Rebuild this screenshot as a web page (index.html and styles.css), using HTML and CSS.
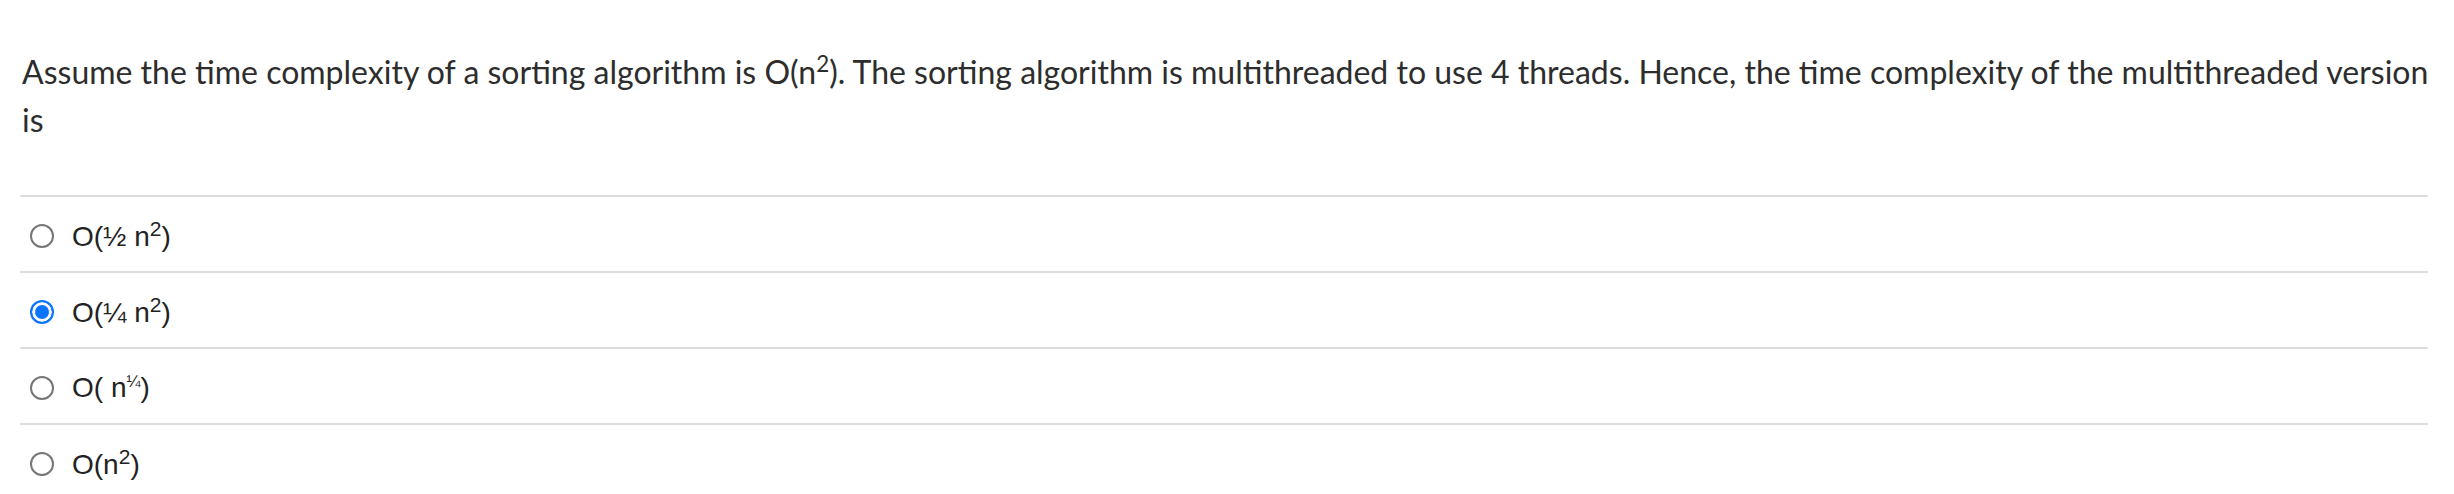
FILE: index.html
```html
<!DOCTYPE html>
<html lang="en">
<head>
<meta charset="utf-8">
<title>Question</title>
<link rel="stylesheet" href="styles.css">
</head>
<body>
<div class="quiz">
  <div class="question">Assume the time complexity of a sorting algorithm is O(n<sup>2</sup>). The sorting algorithm is multithreaded to use 4 threads. Hence, the time complexity of the multithreaded version is</div>
  <div class="answers">
    <div class="answer"><span class="radio"></span><span class="label">O(½ n<sup>2</sup>)</span></div>
    <div class="answer"><span class="radio checked"></span><span class="label">O(¼ n<sup>2</sup>)</span></div>
    <div class="answer"><span class="radio"></span><span class="label">O( n<sup class="frac">¼</sup>)</span></div>
    <div class="answer"><span class="radio"></span><span class="label">O(n<sup>2</sup>)</span></div>
  </div>
</div>
</body>
</html>
```
FILE: styles.css
```css
html, body {
  margin: 0;
  padding: 0;
  background: #ffffff;
}

.quiz {
  padding: 48px 26px 0 20px;
}

.question {
  padding-left: 2px;
  margin-right: -22px;
  font-family: "Lato", "Liberation Sans", sans-serif;
  font-size: 32px;
  line-height: 48px;
  color: #2d2d2d;
  margin-bottom: 51px;
}

.question sup {
  font-size: 0.7em;
  line-height: 1;
}

.answers {
  display: flex;
  flex-direction: column;
}

.answer {
  display: flex;
  align-items: center;
  border-top: 2px solid #dddddd;
  height: 76px;
  box-sizing: border-box;
  padding-top: 4px;
  padding-left: 10px;
  font-family: "Liberation Sans", Arial, sans-serif;
  font-size: 28px;
  color: #222222;
}

.radio {
  width: 24px;
  height: 24px;
  box-sizing: border-box;
  border: 2px solid #767676;
  border-radius: 50%;
  flex: none;
  margin-right: 18px;
}

.radio.checked {
  border: 2.5px solid #0b74fe;
  background: #0b74fe;
  box-shadow: inset 0 0 0 3px #ffffff;
}

.label {
  line-height: 32px;
}

.label sup {
  font-size: 0.75em;
  line-height: 1;
}

.label sup.frac {
  font-size: 0.6em;
}
```
